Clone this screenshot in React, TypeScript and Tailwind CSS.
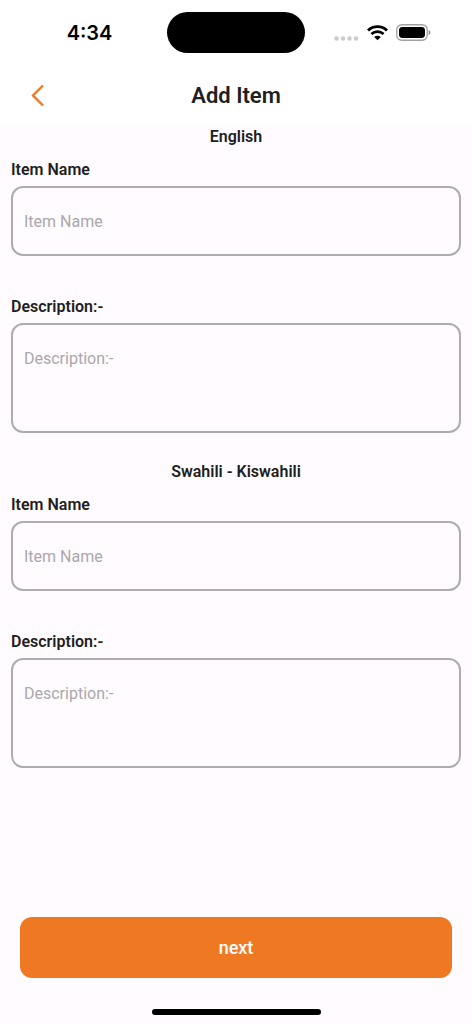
import { useState } from "react";

const languages = [
  { code: "en", title: "English" },
  { code: "sw", title: "Swahili - Kiswahili" },
];

function StatusBar() {
  return (
    <div className="grid h-[53px] grid-cols-[1fr_138px_1fr] items-center pt-3">
      <p className="pl-3 text-center font-['Inter'] text-[20px] leading-6 font-semibold text-black">
        4:34
      </p>

      <div className="h-[41px] rounded-full bg-black" />

      <div className="flex items-center justify-center gap-2 pr-3">
        <svg width="25" height="18" viewBox="0 0 25 18" fill="#cbcbcb">
          <circle cx="2.5" cy="14.5" r="2.2" />
          <circle cx="9" cy="14.5" r="2.2" />
          <circle cx="15.5" cy="14.5" r="2.2" />
          <circle cx="22" cy="14.5" r="2.2" />
        </svg>

        <svg width="21" height="16" viewBox="0 0 21 16" fill="none">
          <path d="M1 5.4C6.3.4 14.7.4 20 5.4" stroke="#000" strokeWidth="2.8" />
          <path d="M4.4 9C7.9 5.8 13.1 5.8 16.6 9" stroke="#000" strokeWidth="2.7" />
          <path d="M7.2 11.9C9.1 10.2 11.9 10.2 13.8 11.9L10.5 15.3Z" fill="#000" />
        </svg>

        <svg width="35" height="17" viewBox="0 0 35 17" fill="none">
          <rect x=".75" y=".75" width="30.5" height="15.5" rx="5" stroke="#a0a0a0" strokeWidth="1.3" />
          <rect x="3" y="3" width="26" height="11" rx="3.4" fill="#000" />
          <path d="M32.6 6C35 7 35 10 32.6 11Z" fill="#8c8c8c" />
        </svg>
      </div>
    </div>
  );
}

function ItemFields({ code, title }: { code: string; title: string }) {
  const [name, setName] = useState("");
  const [description, setDescription] = useState("");

  const box =
    "block w-full rounded-xl border-2 border-[#aeacaf] bg-transparent px-[11px] text-[16px] leading-6 placeholder:text-[#aaa8ab] outline-none";

  return (
    <section className="flex flex-col">
      <h2 className="mb-[9px] text-center text-[16px] leading-6 font-semibold">
        {title}
      </h2>

      <label htmlFor={`name-${code}`} className="mb-1 text-[16px] leading-6 font-semibold">
        Item Name
      </label>
      <input
        id={`name-${code}`}
        value={name}
        onChange={(e) => setName(e.target.value)}
        placeholder="Item Name"
        className={`${box} h-[70px]`}
      />

      <label htmlFor={`description-${code}`} className="mt-[39px] mb-1 text-[16px] leading-6 font-semibold">
        Description:-
      </label>
      <textarea
        id={`description-${code}`}
        value={description}
        onChange={(e) => setDescription(e.target.value)}
        placeholder="Description:-"
        className={`${box} h-[110px] resize-none pt-[22px]`}
      />
    </section>
  );
}

function App() {
  return (
    <div className="flex min-h-screen flex-col bg-[#fffbff] font-['Roboto',sans-serif] text-[#1f1e20]">
      <header className="bg-white">
        <StatusBar />

        <div className="grid h-[72px] grid-cols-[1fr_auto_1fr] items-center pt-[14px]">
          <button type="button" aria-label="Back" className="ml-7 w-5">
            <svg width="20" height="24" viewBox="0 0 20 24" fill="none">
              <path d="M15 1.5L5 11.5L15 21.5" stroke="#f07820" strokeWidth="2.4" />
            </svg>
          </button>
          <h1 className="text-[22px] leading-7 font-semibold">Add Item</h1>
        </div>
      </header>

      <main className="flex flex-col gap-[27px] px-[11px]">
        {languages.map((language) => (
          <ItemFields key={language.code} {...language} />
        ))}
      </main>

      <footer className="mt-auto px-5 pt-8 pb-[9px]">
        <button
          type="button"
          className="block h-[61px] w-full rounded-xl bg-[#ef7922] text-[18px] leading-6 font-medium text-white"
        >
          next
        </button>
        <div className="mx-auto mt-[31px] h-[6px] w-[169px] rounded-full bg-black" />
      </footer>
    </div>
  );
}

export default App;
